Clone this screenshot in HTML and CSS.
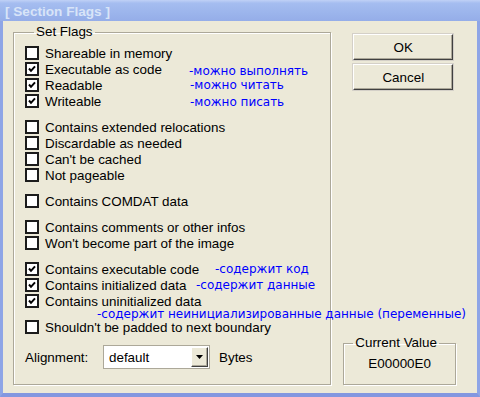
FILE: index.html
```html
<!DOCTYPE html>
<html lang="en">
<head>
    <meta charset="UTF-8">
    <title>Section Flags</title>
    <link rel="stylesheet" href="styles.css">
</head>
<body>

<div class="window">
    <div class="titlebar">
        <span class="title">[ Section Flags ]</span>
    </div>

    <div class="client">
        <!-- флаги секции -->
        <fieldset class="group flags">
            <legend>Set Flags</legend>

            <div class="set">
                <label class="row"><span class="box"></span>Shareable in memory</label>
                <label class="row"><span class="box on"><svg viewBox="0 0 10 10"><polyline points="2,4.5 4,6.8 8,2.3"/></svg></span>Executable as code<span class="note n-exec">-можно выполнять</span></label>
                <label class="row"><span class="box on"><svg viewBox="0 0 10 10"><polyline points="2,4.5 4,6.8 8,2.3"/></svg></span>Readable<span class="note n-read">-можно читать</span></label>
                <label class="row"><span class="box on"><svg viewBox="0 0 10 10"><polyline points="2,4.5 4,6.8 8,2.3"/></svg></span>Writeable<span class="note n-write">-можно писать</span></label>
            </div>

            <div class="set">
                <label class="row"><span class="box"></span>Contains extended relocations</label>
                <label class="row"><span class="box"></span>Discardable as needed</label>
                <label class="row"><span class="box"></span>Can't be cached</label>
                <label class="row"><span class="box"></span>Not pageable</label>
            </div>

            <div class="set">
                <label class="row"><span class="box"></span>Contains COMDAT data</label>
            </div>

            <div class="set">
                <label class="row"><span class="box"></span>Contains comments or other infos</label>
                <label class="row"><span class="box"></span>Won't become part of the image</label>
            </div>

            <div class="set set-wide">
                <label class="row"><span class="box on"><svg viewBox="0 0 10 10"><polyline points="2,4.5 4,6.8 8,2.3"/></svg></span>Contains executable code<span class="note n-code">-содержит код</span></label>
                <label class="row"><span class="box on"><svg viewBox="0 0 10 10"><polyline points="2,4.5 4,6.8 8,2.3"/></svg></span>Contains initialized data<span class="note n-data">-содержит данные</span></label>
                <label class="row"><span class="box on"><svg viewBox="0 0 10 10"><polyline points="2,4.5 4,6.8 8,2.3"/></svg></span>Contains uninitialized data<span class="note n-uninit">-содержит неинициализированные данные (переменные)</span></label>
            </div>

            <div class="set">
                <label class="row"><span class="box"></span>Shouldn't be padded to next boundary</label>
            </div>

            <div class="align-row">
                <span class="align-label">Alignment:</span>
                <div class="combo">
                    <span class="combo-text">default</span>
                    <span class="combo-btn"><svg viewBox="0 0 7 4"><polygon points="0,0 7,0 3.5,4"/></svg></span>
                </div>
                <span>Bytes</span>
            </div>
        </fieldset>

        <div class="side">
            <div class="buttons">
                <button class="btn">OK</button>
                <button class="btn">Cancel</button>
            </div>

            <fieldset class="group current">
                <legend>Current Value</legend>
                <div class="value">E00000E0</div>
            </fieldset>
        </div>
    </div>
</div>

</body>
</html>
```

FILE: styles.css
```css
body {
    margin: 0;
    padding: 0;
    font-family: "Liberation Sans", Arial, sans-serif;
    font-size: 13.4px;
    color: #000;
}

.window {
    width: 480px;
    height: 397px;
    box-sizing: border-box;
    background-color: #ece9d8;
    border-left: 3px solid #8ea5e6;
    border-right: 3px solid #8ea5e6;
    border-bottom: 4px solid #8397e0;
    display: flex;
    flex-direction: column;
}

/* Заголовок окна */
.titlebar {
    height: 21px;
    margin: 0 -3px;
    padding-left: 5px;
    background: linear-gradient(180deg, #c0d1f6 0%, #a5bdf0 15%, #9cb5ec 60%, #95ade8 100%);
    display: flex;
    align-items: center;
}

.title {
    font-weight: bold;
    font-size: 13.6px;
    color: #d8e4f8;
    padding-top: 2px;
}

.client {
    flex: 1;
    display: flex;
    padding: 3px 21px 8px 10px;
}

.group {
    margin: 0;
    padding: 0;
    border: 1px solid #aca899;
    box-shadow: 1px 1px 0 #fff, inset 1px 1px 0 #fff;
}

.group legend {
    padding: 0 2px;
    line-height: 16px;
}

.flags {
    width: 319px;
    height: 361px;
    box-sizing: border-box;
    padding: 5px 0 0 11px;
}

.flags legend {
    margin-left: 9px;
}

.set {
    margin-bottom: 10px;
}

.set-wide {
    margin-top: 3px;
}

.row {
    position: relative;
    display: flex;
    align-items: center;
    height: 16px;
    white-space: nowrap;
}

.box {
    width: 14px;
    height: 14px;
    box-sizing: border-box;
    border: 2px solid #1c1c1c;
    background-color: #fff;
    margin-right: 6px;
    display: flex;
}

.box svg {
    width: 10px;
    height: 10px;
}

.box polyline {
    fill: none;
    stroke: #000;
    stroke-width: 2;
}

/* Пометки синим */
.note {
    position: absolute;
    color: #0000ff;
    font-family: "DejaVu Sans", sans-serif;
    font-size: 12px;
    top: 1px;
}

.n-exec { left: 164px; top: 3px; }
.n-read { left: 165px; }
.n-write { left: 165px; top: 2px; }
.n-code { left: 190px; }
.n-data { left: 171px; }
.n-uninit { left: 72px; top: 14px; }

.align-row {
    display: flex;
    align-items: center;
}

.align-label {
    width: 78px;
}

.combo {
    width: 107px;
    height: 24px;
    box-sizing: border-box;
    border: 1px solid #aca899;
    box-shadow: inset 1px 1px 0 #fff;
    background-color: #fff;
    display: flex;
    align-items: center;
    padding: 1px;
    margin-right: 9px;
}

.combo-text {
    flex: 1;
    padding-left: 4px;
}

.combo-btn {
    width: 17px;
    height: 20px;
    box-sizing: border-box;
    background-color: #ece9d8;
    border-top: 1px solid #fff;
    border-left: 1px solid #fff;
    border-right: 1px solid #404040;
    border-bottom: 1px solid #404040;
    box-shadow: inset -1px -1px 0 #aca899;
    display: flex;
    align-items: center;
    justify-content: center;
}

.combo-btn svg {
    width: 7px;
    height: 4px;
}

/* Правая колонка */
.side {
    width: 113px;
    margin-left: 12px;
    display: flex;
    flex-direction: column;
    justify-content: space-between;
}

.buttons {
    margin: 10px 0 0 10px;
    display: flex;
    flex-direction: column;
    gap: 4px;
}

.btn {
    width: 100px;
    height: 26px;
    font-family: inherit;
    font-size: 13.4px;
    background-color: #ece9d8;
    border-top: 1px solid #fff;
    border-left: 1px solid #fff;
    border-right: 1px solid #404040;
    border-bottom: 1px solid #404040;
    box-shadow: inset -1px -1px 0 #aca899, 0 0 0 1px #d4d0c8;
    padding: 0;
}

.current {
    height: 50px;
    box-sizing: border-box;
}

.current legend {
    margin-left: 9px;
}

.value {
    text-align: center;
    padding-top: 5px;
}
```
